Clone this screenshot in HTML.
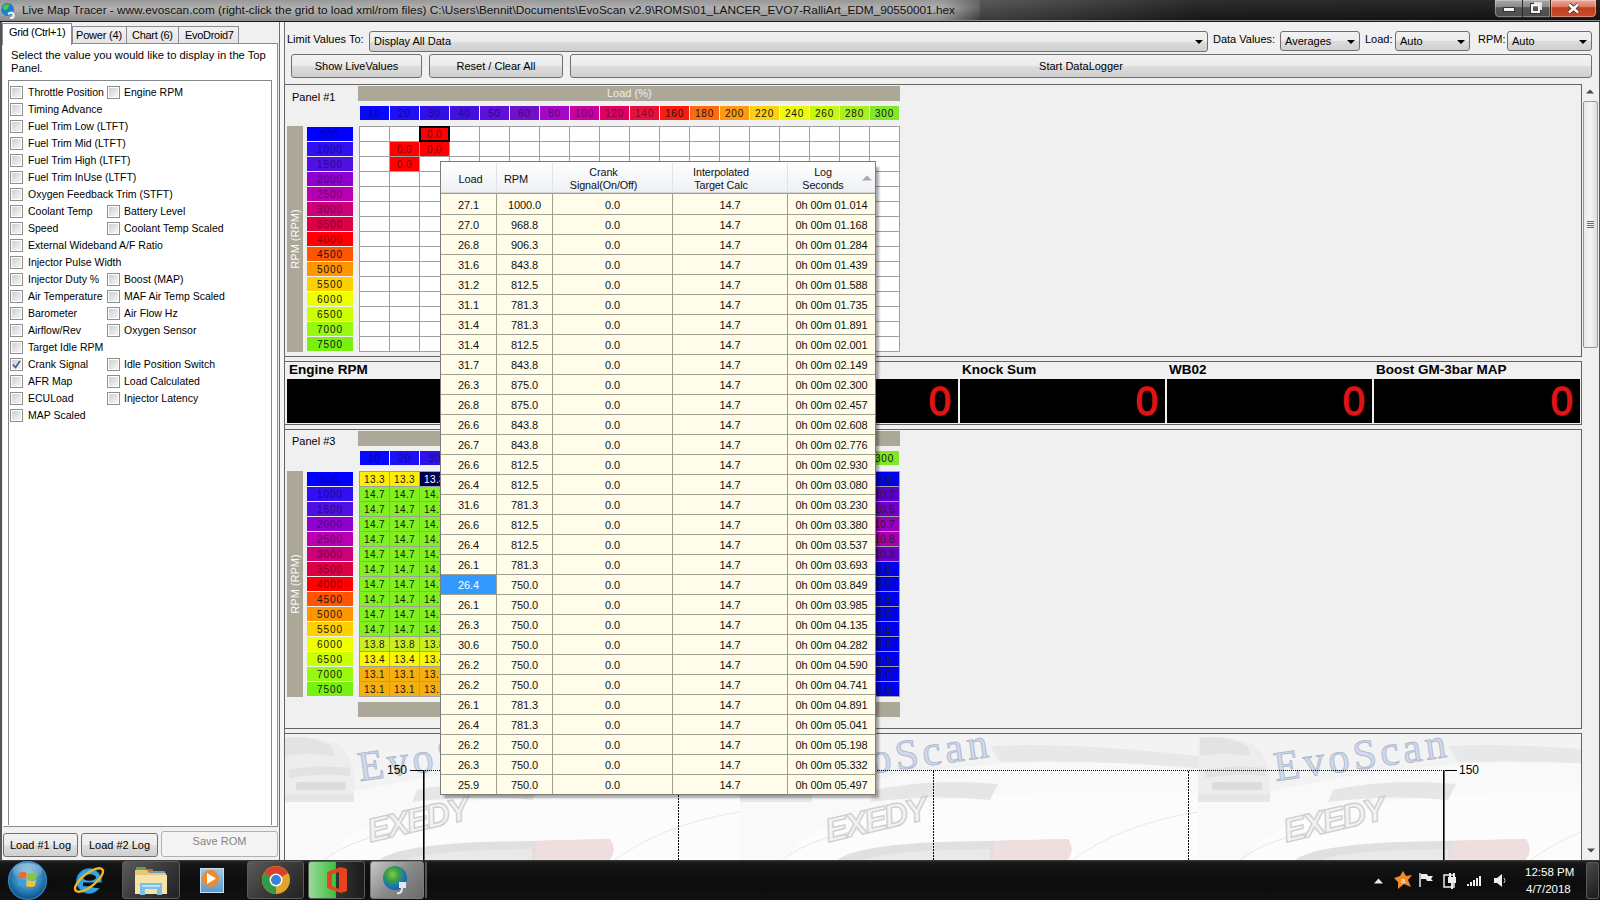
<!DOCTYPE html><html><head><meta charset="utf-8"><style>
html,body{margin:0;padding:0;width:1600px;height:900px;overflow:hidden;background:#f0f0f0;font-family:"Liberation Sans", sans-serif;font-size:11px;color:#000;}
div{box-sizing:border-box;}
.btn{position:absolute;border:1px solid #707070;border-radius:3px;background:linear-gradient(#f2f2f2 0%,#ebebeb 50%,#dddddd 51%,#cfcfcf 100%);text-align:center;line-height:23px;font-size:11px;color:#000;}
.cmb{position:absolute;border:1px solid #707070;border-radius:3px;background:linear-gradient(#f2f2f2 0%,#ebebeb 50%,#dddddd 51%,#cfcfcf 100%);font-size:11px;line-height:18px;padding-left:4px;}
.arr{position:absolute;width:0;height:0;border-left:4px solid transparent;border-right:4px solid transparent;border-top:4px solid #000;}
.cb{position:absolute;width:13px;height:13px;border:1px solid #8e8f8f;background:#fff;}
.cb::after{content:"";position:absolute;left:1px;top:1px;width:9px;height:9px;background:linear-gradient(135deg,#cfcfcf,#f6f6f6);}
.lbl{position:absolute;white-space:nowrap;font-size:10.5px;line-height:13px;}
.hc{position:absolute;top:0;height:14px;width:29px;text-align:center;font-size:10px;line-height:16px;color:#151515;letter-spacing:0.8px;overflow:hidden;}
.rc{position:absolute;left:0;width:46px;height:14px;text-align:center;font-size:10px;line-height:16px;color:#151515;letter-spacing:0.9px;overflow:hidden;}
.gc{position:absolute;width:29px;height:14px;text-align:center;font-size:10px;line-height:15px;color:#151515;letter-spacing:0.4px;}
.pr{position:absolute;left:0;width:435px;height:20px;}
.pc{position:absolute;top:0;height:20px;line-height:22px;text-align:center;font-size:11px;color:#111;letter-spacing:-0.1px;}

</style></head><body>
<div style="position:absolute;left:0px;top:0px;width:1600px;height:22px;background:linear-gradient(90deg,#5c5c5c 0%,#6a6a6a 30%,#4a4a4a 62%,#1c1c1c 75%,#141414 100%);"></div>
<div style="position:absolute;left:0px;top:0px;width:1600px;height:22px;background:linear-gradient(rgba(255,255,255,.08),rgba(0,0,0,.25));"></div>
<div style="position:absolute;left:0px;top:0px;width:980px;height:21px;background:linear-gradient(90deg,rgba(175,175,175,.9) 0%,rgba(175,175,175,.9) 96%,rgba(175,175,175,0) 100%);"></div>
<div style="position:absolute;left:0px;top:0px;width:980px;height:21px;background:linear-gradient(rgba(120,120,120,.35),rgba(255,255,255,.12) 40%,rgba(60,60,60,.25) 100%);"></div>
<div style="position:absolute;left:0px;top:20px;width:1600px;height:1px;background:#8a8a8a;"></div>
<div style="position:absolute;left:0px;top:21px;width:1600px;height:1px;background:#1a1a1a;"></div>
<div style="position:absolute;left:22px;top:4px;white-space:nowrap;line-height:13px;font-size:11.8px;color:#111;">Live Map Tracer - www.evoscan.com (right-click the grid to load xml/rom files) C:\Users\Bennit\Documents\EvoScan v2.9\ROMS\01_LANCER_EVO7-RalliArt_EDM_90550001.hex</div>
<svg style="position:absolute;left:0px;top:2px" width="18" height="18" viewBox="0 0 18 18"><circle cx="7.5" cy="7.5" r="6.5" fill="#1d7fc4"/><path d="M2.5 5 Q5 1.5 9.5 2.5 Q9 6 5.5 8.5 Q3 8 2.5 5Z" fill="#5cc24a"/><path d="M8 12 Q12 9 13.5 12.5 Q15 16 10 16" stroke="#e8f2ff" stroke-width="2.2" fill="none"/></svg>
<div style="position:absolute;left:1494px;top:-1px;width:57px;height:19px;border:1px solid #2a2a2a;border-radius:0 0 0 5px;background:linear-gradient(#a8a8a8,#8a8a8a 40%,#555 45%,#4d4d4d 100%);box-shadow:inset 0 0 0 1px rgba(255,255,255,.3);"></div>
<div style="position:absolute;left:1522px;top:0px;width:1px;height:17px;background:#2a2a2a;"></div>
<div style="position:absolute;left:1504px;top:8px;width:10px;height:3px;background:#f4f4f4;box-shadow:0 0 0 1px #333;"></div>
<div style="position:absolute;left:1531px;top:4px;width:9px;height:9px;border:2px solid #f4f4f4;box-shadow:0 0 0 1px #333;"></div>
<div style="position:absolute;left:1534px;top:2px;width:8px;height:8px;border-top:2px solid #e0e0e0;border-right:2px solid #e0e0e0;"></div>
<div style="position:absolute;left:1550px;top:-1px;width:47px;height:19px;border:1px solid #3a1a10;border-radius:0 0 5px 0;background:linear-gradient(#f0a898,#d87a66 40%,#c2401e 45%,#c84a30 100%);box-shadow:inset 0 0 0 1px rgba(255,255,255,.35);"></div>
<svg style="position:absolute;left:1567px;top:3px" width="13" height="11" viewBox="0 0 13 11"><path d="M2 1.5 L11 9.5 M11 1.5 L2 9.5" stroke="#4a2a20" stroke-width="4.2"/><path d="M2 1.5 L11 9.5 M11 1.5 L2 9.5" stroke="#fff" stroke-width="2.6"/></svg>
<div style="position:absolute;left:0px;top:22px;width:2px;height:838px;background:#555;"></div>
<div style="position:absolute;left:1599px;top:22px;width:1px;height:838px;background:#555;"></div>
<div style="position:absolute;left:72px;top:26px;width:55px;height:19px;border:1px solid #898c95;border-bottom:none;background:linear-gradient(#f2f2f2,#e3e3e3);"></div>
<div style="position:absolute;left:126px;top:26px;width:53px;height:19px;border:1px solid #898c95;border-bottom:none;background:linear-gradient(#f2f2f2,#e3e3e3);"></div>
<div style="position:absolute;left:178px;top:26px;width:61px;height:19px;border:1px solid #898c95;border-bottom:none;background:linear-gradient(#f2f2f2,#e3e3e3);"></div>
<div style="position:absolute;left:3px;top:43px;width:275px;height:784px;background:#fff;border:1px solid #898c95;border-left-color:#fff;"></div>
<div style="position:absolute;left:2px;top:23px;width:70px;height:22px;border:1px solid #898c95;border-bottom:none;background:#fff;"></div>
<div style="position:absolute;left:9px;top:26px;white-space:nowrap;line-height:13px;font-size:11px;letter-spacing:-0.35px;">Grid (Ctrl+1)</div>
<div style="position:absolute;left:76px;top:29px;white-space:nowrap;line-height:13px;font-size:11px;letter-spacing:-0.2px;">Power (4)</div>
<div style="position:absolute;left:132px;top:29px;white-space:nowrap;line-height:13px;font-size:11px;letter-spacing:-0.3px;">Chart (6)</div>
<div style="position:absolute;left:185px;top:29px;white-space:nowrap;line-height:13px;font-size:11px;letter-spacing:-0.3px;">EvoDroid7</div>
<div style="position:absolute;left:11px;top:49px;white-space:nowrap;line-height:13px;font-size:11.2px;line-height:13px;">Select the value you would like to display in the Top<br>Panel.</div>
<div style="position:absolute;left:8px;top:80px;width:264px;height:745px;background:#fff;border:1px solid #828790;border-bottom:none;"></div>
<div class="cb" style="left:10px;top:86px;"></div>
<div class="lbl" style="left:28px;top:86px;">Throttle Position</div>
<div class="cb" style="left:107px;top:86px;"></div>
<div class="lbl" style="left:124px;top:86px;">Engine RPM</div>
<div class="cb" style="left:10px;top:103px;"></div>
<div class="lbl" style="left:28px;top:103px;">Timing Advance</div>
<div class="cb" style="left:10px;top:120px;"></div>
<div class="lbl" style="left:28px;top:120px;">Fuel Trim Low (LTFT)</div>
<div class="cb" style="left:10px;top:137px;"></div>
<div class="lbl" style="left:28px;top:137px;">Fuel Trim Mid (LTFT)</div>
<div class="cb" style="left:10px;top:154px;"></div>
<div class="lbl" style="left:28px;top:154px;">Fuel Trim High (LTFT)</div>
<div class="cb" style="left:10px;top:171px;"></div>
<div class="lbl" style="left:28px;top:171px;">Fuel Trim InUse (LTFT)</div>
<div class="cb" style="left:10px;top:188px;"></div>
<div class="lbl" style="left:28px;top:188px;">Oxygen Feedback Trim (STFT)</div>
<div class="cb" style="left:10px;top:205px;"></div>
<div class="lbl" style="left:28px;top:205px;">Coolant Temp</div>
<div class="cb" style="left:107px;top:205px;"></div>
<div class="lbl" style="left:124px;top:205px;">Battery Level</div>
<div class="cb" style="left:10px;top:222px;"></div>
<div class="lbl" style="left:28px;top:222px;">Speed</div>
<div class="cb" style="left:107px;top:222px;"></div>
<div class="lbl" style="left:124px;top:222px;">Coolant Temp Scaled</div>
<div class="cb" style="left:10px;top:239px;"></div>
<div class="lbl" style="left:28px;top:239px;">External Wideband A/F Ratio</div>
<div class="cb" style="left:10px;top:256px;"></div>
<div class="lbl" style="left:28px;top:256px;">Injector Pulse Width</div>
<div class="cb" style="left:10px;top:273px;"></div>
<div class="lbl" style="left:28px;top:273px;">Injector Duty %</div>
<div class="cb" style="left:107px;top:273px;"></div>
<div class="lbl" style="left:124px;top:273px;">Boost (MAP)</div>
<div class="cb" style="left:10px;top:290px;"></div>
<div class="lbl" style="left:28px;top:290px;">Air Temperature</div>
<div class="cb" style="left:107px;top:290px;"></div>
<div class="lbl" style="left:124px;top:290px;">MAF Air Temp Scaled</div>
<div class="cb" style="left:10px;top:307px;"></div>
<div class="lbl" style="left:28px;top:307px;">Barometer</div>
<div class="cb" style="left:107px;top:307px;"></div>
<div class="lbl" style="left:124px;top:307px;">Air Flow Hz</div>
<div class="cb" style="left:10px;top:324px;"></div>
<div class="lbl" style="left:28px;top:324px;">Airflow/Rev</div>
<div class="cb" style="left:107px;top:324px;"></div>
<div class="lbl" style="left:124px;top:324px;">Oxygen Sensor</div>
<div class="cb" style="left:10px;top:341px;"></div>
<div class="lbl" style="left:28px;top:341px;">Target Idle RPM</div>
<div class="cb" style="left:10px;top:358px;"></div>
<div class="lbl" style="left:28px;top:358px;">Crank Signal</div>
<svg style="position:absolute;left:11px;top:359px" width="11" height="11" viewBox="0 0 11 11"><path d="M2 5.5 L4.5 8.5 L9 2" stroke="#3a5a9a" stroke-width="1.6" fill="none"/></svg>
<div class="cb" style="left:107px;top:358px;"></div>
<div class="lbl" style="left:124px;top:358px;">Idle Position Switch</div>
<div class="cb" style="left:10px;top:375px;"></div>
<div class="lbl" style="left:28px;top:375px;">AFR Map</div>
<div class="cb" style="left:107px;top:375px;"></div>
<div class="lbl" style="left:124px;top:375px;">Load Calculated</div>
<div class="cb" style="left:10px;top:392px;"></div>
<div class="lbl" style="left:28px;top:392px;">ECULoad</div>
<div class="cb" style="left:107px;top:392px;"></div>
<div class="lbl" style="left:124px;top:392px;">Injector Latency</div>
<div class="cb" style="left:10px;top:409px;"></div>
<div class="lbl" style="left:28px;top:409px;">MAP Scaled</div>
<div class="btn" style="left:3px;top:833px;width:75px;height:24px;">Load #1 Log</div>
<div class="btn" style="left:81px;top:833px;width:77px;height:24px;">Load #2 Log</div>
<div style="position:absolute;left:161px;top:831px;width:117px;height:26px;border:1px solid #adb2b5;border-radius:3px;background:#f4f4f4;color:#838383;text-align:center;line-height:19px;font-size:11px;">Save ROM</div>
<div style="position:absolute;left:279px;top:22px;width:1px;height:838px;background:#6d6d6d;"></div>
<div style="position:absolute;left:280px;top:22px;width:4px;height:838px;background:#f6f6f6;"></div>
<div style="position:absolute;left:284px;top:22px;width:1px;height:838px;background:#6d6d6d;"></div>
<div style="position:absolute;left:287px;top:33px;white-space:nowrap;line-height:13px;font-size:11px;">Limit Values To:</div>
<div class="cmb" style="left:369px;top:31px;width:839px;height:21px;">Display All Data</div>
<div class="arr" style="left:1195px;top:40px;"></div>
<div style="position:absolute;left:1213px;top:33px;white-space:nowrap;line-height:13px;font-size:11px;">Data Values:</div>
<div class="cmb" style="left:1280px;top:31px;width:80px;height:20px;">Averages</div>
<div class="arr" style="left:1347px;top:40px;"></div>
<div style="position:absolute;left:1365px;top:33px;white-space:nowrap;line-height:13px;font-size:11px;">Load:</div>
<div class="cmb" style="left:1395px;top:31px;width:75px;height:20px;">Auto</div>
<div class="arr" style="left:1457px;top:40px;"></div>
<div style="position:absolute;left:1478px;top:33px;white-space:nowrap;line-height:13px;font-size:11px;">RPM:</div>
<div class="cmb" style="left:1507px;top:31px;width:85px;height:20px;">Auto</div>
<div class="arr" style="left:1579px;top:40px;"></div>
<div class="btn" style="left:291px;top:54px;width:131px;height:24px;">Show LiveValues</div>
<div class="btn" style="left:429px;top:54px;width:134px;height:24px;">Reset / Clear All</div>
<div class="btn" style="left:570px;top:54px;width:1022px;height:24px;">Start DataLogger</div>
<div style="position:absolute;left:1582px;top:84px;width:16px;height:776px;background:#f0f0f0;"></div>
<svg style="position:absolute;left:1586px;top:89px" width="8" height="5"><path d="M0 4.5 L4 0.5 L8 4.5Z" fill="#4a4a4a"/></svg>
<svg style="position:absolute;left:1587px;top:848px" width="8" height="5"><path d="M0 0.5 L4 4.5 L8 0.5Z" fill="#4a4a4a"/></svg>
<div style="position:absolute;left:1583px;top:101px;width:15px;height:247px;border:1px solid #979797;border-radius:2px;background:linear-gradient(90deg,#e8e8e8,#f4f4f4 50%,#dcdcdc);"></div>
<div style="position:absolute;left:1587px;top:221px;width:7px;height:1px;background:#6a6a6a;"></div>
<div style="position:absolute;left:1587px;top:223px;width:7px;height:1px;background:#6a6a6a;"></div>
<div style="position:absolute;left:1587px;top:225px;width:7px;height:1px;background:#6a6a6a;"></div>
<div style="position:absolute;left:1587px;top:227px;width:7px;height:1px;background:#6a6a6a;"></div>
<div style="position:absolute;left:284px;top:84px;width:1298px;height:273px;border:1px solid #646464;background:#f0f0f0;"></div>
<div style="position:absolute;left:292px;top:91px;white-space:nowrap;line-height:13px;font-size:11px;">Panel #1</div>
<div style="position:absolute;left:358px;top:86px;width:542px;height:15px;background:#aca899;"></div>
<div style="position:absolute;left:607px;top:86px;white-space:nowrap;line-height:13px;font-size:11px;color:#ededed;line-height:15px;">Load (%)</div>
<div class="hc" style="left:360px;top:106px;background:#0808ff;color:rgba(0,0,30,.5);">10</div>
<div class="hc" style="left:390px;top:106px;background:#1e10f5;color:rgba(0,0,30,.5);">20</div>
<div class="hc" style="left:420px;top:106px;background:#3010e8;color:rgba(0,0,30,.5);">30</div>
<div class="hc" style="left:450px;top:106px;background:#4210e0;color:rgba(0,0,30,.5);">40</div>
<div class="hc" style="left:480px;top:106px;background:#5c10d8;color:rgba(0,0,30,.5);">50</div>
<div class="hc" style="left:510px;top:106px;background:#7010c8;color:rgba(0,0,30,.5);">60</div>
<div class="hc" style="left:540px;top:106px;background:#a408c4;color:rgba(0,0,30,.5);">80</div>
<div class="hc" style="left:570px;top:106px;background:#c800a0;color:rgba(0,0,30,.5);">100</div>
<div class="hc" style="left:600px;top:106px;background:#e00060;color:rgba(0,0,30,.5);">120</div>
<div class="hc" style="left:630px;top:106px;background:#e8103a;color:rgba(0,0,30,.5);">140</div>
<div class="hc" style="left:660px;top:106px;background:#ff1a10;color:#151515;">160</div>
<div class="hc" style="left:690px;top:106px;background:#ff6a10;color:#151515;">180</div>
<div class="hc" style="left:720px;top:106px;background:#ff9a10;color:#151515;">200</div>
<div class="hc" style="left:750px;top:106px;background:#ffd010;color:#151515;">220</div>
<div class="hc" style="left:780px;top:106px;background:#eef810;color:#151515;">240</div>
<div class="hc" style="left:810px;top:106px;background:#c8f810;color:#151515;">260</div>
<div class="hc" style="left:840px;top:106px;background:#a8f020;color:#151515;">280</div>
<div class="hc" style="left:870px;top:106px;background:#80e828;color:#151515;">300</div>
<div style="position:absolute;left:287px;top:126px;width:16px;height:226px;background:#aca899;"></div>
<div style="position:absolute;left:237px;top:231px;width:116px;height:16px;transform:rotate(-90deg);text-align:center;color:#fafafa;font-size:11px;line-height:16px;">RPM (RPM)</div>
<div class="rc" style="left:307px;top:127px;background:#0000ff;color:rgba(0,0,30,.5);">500</div>
<div class="rc" style="left:307px;top:142px;background:#3010f0;color:rgba(0,0,30,.5);">1000</div>
<div class="rc" style="left:307px;top:157px;background:#5010e0;color:rgba(0,0,30,.5);">1500</div>
<div class="rc" style="left:307px;top:172px;background:#9000d0;color:rgba(0,0,30,.5);">2000</div>
<div class="rc" style="left:307px;top:187px;background:#b800b0;color:rgba(0,0,30,.5);">2500</div>
<div class="rc" style="left:307px;top:202px;background:#cc0077;color:rgba(0,0,30,.5);">3000</div>
<div class="rc" style="left:307px;top:217px;background:#dd0044;color:rgba(0,0,30,.5);">3500</div>
<div class="rc" style="left:307px;top:232px;background:#ff0000;color:rgba(0,0,30,.5);">4000</div>
<div class="rc" style="left:307px;top:247px;background:#ff5500;color:#151515;">4500</div>
<div class="rc" style="left:307px;top:262px;background:#ff9500;color:#151515;">5000</div>
<div class="rc" style="left:307px;top:277px;background:#ffd000;color:#151515;">5500</div>
<div class="rc" style="left:307px;top:292px;background:#eeff00;color:#151515;">6000</div>
<div class="rc" style="left:307px;top:307px;background:#ccff00;color:#151515;">6500</div>
<div class="rc" style="left:307px;top:322px;background:#99f810;color:#151515;">7000</div>
<div class="rc" style="left:307px;top:337px;background:#78f010;color:#151515;">7500</div>
<div style="position:absolute;left:359px;top:126px;width:541px;height:226px;background:#fff;"></div>
<div class="gc" style="left:390px;top:142px;background:#ff0000;color:rgba(0,0,0,.55);">0.0</div>
<div class="gc" style="left:420px;top:142px;background:#ff0000;color:rgba(0,0,0,.55);">0.0</div>
<div class="gc" style="left:390px;top:157px;background:#ff0000;color:rgba(0,0,0,.55);">0.0</div>
<div style="position:absolute;left:359px;top:126px;width:1px;height:226px;background:#a0a0a0;"></div>
<div style="position:absolute;left:389px;top:126px;width:1px;height:226px;background:#a0a0a0;"></div>
<div style="position:absolute;left:419px;top:126px;width:1px;height:226px;background:#a0a0a0;"></div>
<div style="position:absolute;left:449px;top:126px;width:1px;height:226px;background:#a0a0a0;"></div>
<div style="position:absolute;left:479px;top:126px;width:1px;height:226px;background:#a0a0a0;"></div>
<div style="position:absolute;left:509px;top:126px;width:1px;height:226px;background:#a0a0a0;"></div>
<div style="position:absolute;left:539px;top:126px;width:1px;height:226px;background:#a0a0a0;"></div>
<div style="position:absolute;left:569px;top:126px;width:1px;height:226px;background:#a0a0a0;"></div>
<div style="position:absolute;left:599px;top:126px;width:1px;height:226px;background:#a0a0a0;"></div>
<div style="position:absolute;left:629px;top:126px;width:1px;height:226px;background:#a0a0a0;"></div>
<div style="position:absolute;left:659px;top:126px;width:1px;height:226px;background:#a0a0a0;"></div>
<div style="position:absolute;left:689px;top:126px;width:1px;height:226px;background:#a0a0a0;"></div>
<div style="position:absolute;left:719px;top:126px;width:1px;height:226px;background:#a0a0a0;"></div>
<div style="position:absolute;left:749px;top:126px;width:1px;height:226px;background:#a0a0a0;"></div>
<div style="position:absolute;left:779px;top:126px;width:1px;height:226px;background:#a0a0a0;"></div>
<div style="position:absolute;left:809px;top:126px;width:1px;height:226px;background:#a0a0a0;"></div>
<div style="position:absolute;left:839px;top:126px;width:1px;height:226px;background:#a0a0a0;"></div>
<div style="position:absolute;left:869px;top:126px;width:1px;height:226px;background:#a0a0a0;"></div>
<div style="position:absolute;left:899px;top:126px;width:1px;height:226px;background:#a0a0a0;"></div>
<div style="position:absolute;left:359px;top:126px;width:541px;height:1px;background:#a0a0a0;"></div>
<div style="position:absolute;left:359px;top:141px;width:541px;height:1px;background:#a0a0a0;"></div>
<div style="position:absolute;left:359px;top:156px;width:541px;height:1px;background:#a0a0a0;"></div>
<div style="position:absolute;left:359px;top:171px;width:541px;height:1px;background:#a0a0a0;"></div>
<div style="position:absolute;left:359px;top:186px;width:541px;height:1px;background:#a0a0a0;"></div>
<div style="position:absolute;left:359px;top:201px;width:541px;height:1px;background:#a0a0a0;"></div>
<div style="position:absolute;left:359px;top:216px;width:541px;height:1px;background:#a0a0a0;"></div>
<div style="position:absolute;left:359px;top:231px;width:541px;height:1px;background:#a0a0a0;"></div>
<div style="position:absolute;left:359px;top:246px;width:541px;height:1px;background:#a0a0a0;"></div>
<div style="position:absolute;left:359px;top:261px;width:541px;height:1px;background:#a0a0a0;"></div>
<div style="position:absolute;left:359px;top:276px;width:541px;height:1px;background:#a0a0a0;"></div>
<div style="position:absolute;left:359px;top:291px;width:541px;height:1px;background:#a0a0a0;"></div>
<div style="position:absolute;left:359px;top:306px;width:541px;height:1px;background:#a0a0a0;"></div>
<div style="position:absolute;left:359px;top:321px;width:541px;height:1px;background:#a0a0a0;"></div>
<div style="position:absolute;left:359px;top:336px;width:541px;height:1px;background:#a0a0a0;"></div>
<div style="position:absolute;left:359px;top:351px;width:541px;height:1px;background:#a0a0a0;"></div>
<div style="position:absolute;left:419px;top:126px;width:31px;height:16px;border:2px solid #000;background:#ff0000;text-align:center;font-size:10px;line-height:13px;color:rgba(0,0,0,.6);letter-spacing:0.4px;">0.0</div>
<div style="position:absolute;left:284px;top:429px;width:1298px;height:300px;border:1px solid #646464;background:#f0f0f0;"></div>
<div style="position:absolute;left:292px;top:435px;white-space:nowrap;line-height:13px;font-size:11px;">Panel #3</div>
<div style="position:absolute;left:358px;top:431px;width:542px;height:15px;background:#aca899;"></div>
<div style="position:absolute;left:607px;top:431px;white-space:nowrap;line-height:13px;font-size:11px;color:#ededed;line-height:15px;">Load (%)</div>
<div class="hc" style="left:360px;top:451px;background:#0808ff;color:rgba(0,0,30,.5);">10</div>
<div class="hc" style="left:390px;top:451px;background:#1e10f5;color:rgba(0,0,30,.5);">20</div>
<div class="hc" style="left:420px;top:451px;background:#3010e8;color:rgba(0,0,30,.5);">30</div>
<div class="hc" style="left:450px;top:451px;background:#4210e0;color:rgba(0,0,30,.5);">40</div>
<div class="hc" style="left:480px;top:451px;background:#5c10d8;color:rgba(0,0,30,.5);">50</div>
<div class="hc" style="left:510px;top:451px;background:#7010c8;color:rgba(0,0,30,.5);">60</div>
<div class="hc" style="left:540px;top:451px;background:#a408c4;color:rgba(0,0,30,.5);">80</div>
<div class="hc" style="left:570px;top:451px;background:#c800a0;color:rgba(0,0,30,.5);">100</div>
<div class="hc" style="left:600px;top:451px;background:#e00060;color:rgba(0,0,30,.5);">120</div>
<div class="hc" style="left:630px;top:451px;background:#e8103a;color:rgba(0,0,30,.5);">140</div>
<div class="hc" style="left:660px;top:451px;background:#ff1a10;color:#151515;">160</div>
<div class="hc" style="left:690px;top:451px;background:#ff6a10;color:#151515;">180</div>
<div class="hc" style="left:720px;top:451px;background:#ff9a10;color:#151515;">200</div>
<div class="hc" style="left:750px;top:451px;background:#ffd010;color:#151515;">220</div>
<div class="hc" style="left:780px;top:451px;background:#eef810;color:#151515;">240</div>
<div class="hc" style="left:810px;top:451px;background:#c8f810;color:#151515;">260</div>
<div class="hc" style="left:840px;top:451px;background:#a8f020;color:#151515;">280</div>
<div class="hc" style="left:870px;top:451px;background:#80e828;color:#151515;">300</div>
<div style="position:absolute;left:287px;top:471px;width:16px;height:226px;background:#aca899;"></div>
<div style="position:absolute;left:237px;top:576px;width:116px;height:16px;transform:rotate(-90deg);text-align:center;color:#fafafa;font-size:11px;line-height:16px;">RPM (RPM)</div>
<div class="rc" style="left:307px;top:472px;background:#0000ff;color:rgba(0,0,30,.5);">500</div>
<div class="rc" style="left:307px;top:487px;background:#3010f0;color:rgba(0,0,30,.5);">1000</div>
<div class="rc" style="left:307px;top:502px;background:#5010e0;color:rgba(0,0,30,.5);">1500</div>
<div class="rc" style="left:307px;top:517px;background:#9000d0;color:rgba(0,0,30,.5);">2000</div>
<div class="rc" style="left:307px;top:532px;background:#b800b0;color:rgba(0,0,30,.5);">2500</div>
<div class="rc" style="left:307px;top:547px;background:#cc0077;color:rgba(0,0,30,.5);">3000</div>
<div class="rc" style="left:307px;top:562px;background:#dd0044;color:rgba(0,0,30,.5);">3500</div>
<div class="rc" style="left:307px;top:577px;background:#ff0000;color:rgba(0,0,30,.5);">4000</div>
<div class="rc" style="left:307px;top:592px;background:#ff5500;color:#151515;">4500</div>
<div class="rc" style="left:307px;top:607px;background:#ff9500;color:#151515;">5000</div>
<div class="rc" style="left:307px;top:622px;background:#ffd000;color:#151515;">5500</div>
<div class="rc" style="left:307px;top:637px;background:#eeff00;color:#151515;">6000</div>
<div class="rc" style="left:307px;top:652px;background:#ccff00;color:#151515;">6500</div>
<div class="rc" style="left:307px;top:667px;background:#99f810;color:#151515;">7000</div>
<div class="rc" style="left:307px;top:682px;background:#78f010;color:#151515;">7500</div>
<div style="position:absolute;left:359px;top:471px;width:541px;height:226px;background:#fff;"></div>
<div class="gc" style="left:360px;top:472px;background:#ffee00;color:#151515;">13.3</div>
<div class="gc" style="left:360px;top:487px;background:#80f020;color:#151515;">14.7</div>
<div class="gc" style="left:360px;top:502px;background:#80f020;color:#151515;">14.7</div>
<div class="gc" style="left:360px;top:517px;background:#80f020;color:#151515;">14.7</div>
<div class="gc" style="left:360px;top:532px;background:#80f020;color:#151515;">14.7</div>
<div class="gc" style="left:360px;top:547px;background:#80f020;color:#151515;">14.7</div>
<div class="gc" style="left:360px;top:562px;background:#80f020;color:#151515;">14.7</div>
<div class="gc" style="left:360px;top:577px;background:#80f020;color:#151515;">14.7</div>
<div class="gc" style="left:360px;top:592px;background:#80f020;color:#151515;">14.7</div>
<div class="gc" style="left:360px;top:607px;background:#80f020;color:#151515;">14.7</div>
<div class="gc" style="left:360px;top:622px;background:#80f020;color:#151515;">14.7</div>
<div class="gc" style="left:360px;top:637px;background:#c8f020;color:#151515;">13.8</div>
<div class="gc" style="left:360px;top:652px;background:#f8f800;color:#151515;">13.4</div>
<div class="gc" style="left:360px;top:667px;background:#f5b010;color:#151515;">13.1</div>
<div class="gc" style="left:360px;top:682px;background:#f5b010;color:#151515;">13.1</div>
<div class="gc" style="left:390px;top:472px;background:#ffee00;color:#151515;">13.3</div>
<div class="gc" style="left:390px;top:487px;background:#80f020;color:#151515;">14.7</div>
<div class="gc" style="left:390px;top:502px;background:#80f020;color:#151515;">14.7</div>
<div class="gc" style="left:390px;top:517px;background:#80f020;color:#151515;">14.7</div>
<div class="gc" style="left:390px;top:532px;background:#80f020;color:#151515;">14.7</div>
<div class="gc" style="left:390px;top:547px;background:#80f020;color:#151515;">14.7</div>
<div class="gc" style="left:390px;top:562px;background:#80f020;color:#151515;">14.7</div>
<div class="gc" style="left:390px;top:577px;background:#80f020;color:#151515;">14.7</div>
<div class="gc" style="left:390px;top:592px;background:#80f020;color:#151515;">14.7</div>
<div class="gc" style="left:390px;top:607px;background:#80f020;color:#151515;">14.7</div>
<div class="gc" style="left:390px;top:622px;background:#80f020;color:#151515;">14.7</div>
<div class="gc" style="left:390px;top:637px;background:#c8f020;color:#151515;">13.8</div>
<div class="gc" style="left:390px;top:652px;background:#f8f800;color:#151515;">13.4</div>
<div class="gc" style="left:390px;top:667px;background:#f5b010;color:#151515;">13.1</div>
<div class="gc" style="left:390px;top:682px;background:#f5b010;color:#151515;">13.1</div>
<div class="gc" style="left:420px;top:472px;background:#000050;color:#ffffff;">13.3</div>
<div class="gc" style="left:420px;top:487px;background:#80f020;color:#151515;">14.7</div>
<div class="gc" style="left:420px;top:502px;background:#80f020;color:#151515;">14.7</div>
<div class="gc" style="left:420px;top:517px;background:#80f020;color:#151515;">14.7</div>
<div class="gc" style="left:420px;top:532px;background:#80f020;color:#151515;">14.7</div>
<div class="gc" style="left:420px;top:547px;background:#80f020;color:#151515;">14.7</div>
<div class="gc" style="left:420px;top:562px;background:#80f020;color:#151515;">14.7</div>
<div class="gc" style="left:420px;top:577px;background:#80f020;color:#151515;">14.7</div>
<div class="gc" style="left:420px;top:592px;background:#80f020;color:#151515;">14.7</div>
<div class="gc" style="left:420px;top:607px;background:#80f020;color:#151515;">14.7</div>
<div class="gc" style="left:420px;top:622px;background:#80f020;color:#151515;">14.7</div>
<div class="gc" style="left:420px;top:637px;background:#c8f020;color:#151515;">13.8</div>
<div class="gc" style="left:420px;top:652px;background:#f8f800;color:#151515;">13.4</div>
<div class="gc" style="left:420px;top:667px;background:#f5b010;color:#151515;">13.1</div>
<div class="gc" style="left:420px;top:682px;background:#f5b010;color:#151515;">13.1</div>
<div class="gc" style="left:870px;top:472px;background:#0000f0;color:#202020;">9.6</div>
<div class="gc" style="left:870px;top:487px;background:#5a00cc;color:#202020;">10.2</div>
<div class="gc" style="left:870px;top:502px;background:#7000c8;color:#202020;">10.5</div>
<div class="gc" style="left:870px;top:517px;background:#9800c0;color:#202020;">10.7</div>
<div class="gc" style="left:870px;top:532px;background:#a800b0;color:#202020;">10.8</div>
<div class="gc" style="left:870px;top:547px;background:#6800c8;color:#202020;">10.3</div>
<div class="gc" style="left:870px;top:562px;background:#0000f0;color:#202020;">9.5</div>
<div class="gc" style="left:870px;top:577px;background:#0000f0;color:#202020;">9.5</div>
<div class="gc" style="left:870px;top:592px;background:#0000f0;color:#202020;">9.5</div>
<div class="gc" style="left:870px;top:607px;background:#0000f0;color:#202020;">9.5</div>
<div class="gc" style="left:870px;top:622px;background:#0000f0;color:#202020;">9.5</div>
<div class="gc" style="left:870px;top:637px;background:#0000f0;color:#202020;">9.5</div>
<div class="gc" style="left:870px;top:652px;background:#0000f0;color:#202020;">9.5</div>
<div class="gc" style="left:870px;top:667px;background:#0000f0;color:#202020;">9.5</div>
<div class="gc" style="left:870px;top:682px;background:#0000f0;color:#202020;">9.5</div>
<div style="position:absolute;left:359px;top:471px;width:1px;height:226px;background:#a0a0a0;"></div>
<div style="position:absolute;left:389px;top:471px;width:1px;height:226px;background:#a0a0a0;"></div>
<div style="position:absolute;left:419px;top:471px;width:1px;height:226px;background:#a0a0a0;"></div>
<div style="position:absolute;left:449px;top:471px;width:1px;height:226px;background:#a0a0a0;"></div>
<div style="position:absolute;left:479px;top:471px;width:1px;height:226px;background:#a0a0a0;"></div>
<div style="position:absolute;left:509px;top:471px;width:1px;height:226px;background:#a0a0a0;"></div>
<div style="position:absolute;left:539px;top:471px;width:1px;height:226px;background:#a0a0a0;"></div>
<div style="position:absolute;left:569px;top:471px;width:1px;height:226px;background:#a0a0a0;"></div>
<div style="position:absolute;left:599px;top:471px;width:1px;height:226px;background:#a0a0a0;"></div>
<div style="position:absolute;left:629px;top:471px;width:1px;height:226px;background:#a0a0a0;"></div>
<div style="position:absolute;left:659px;top:471px;width:1px;height:226px;background:#a0a0a0;"></div>
<div style="position:absolute;left:689px;top:471px;width:1px;height:226px;background:#a0a0a0;"></div>
<div style="position:absolute;left:719px;top:471px;width:1px;height:226px;background:#a0a0a0;"></div>
<div style="position:absolute;left:749px;top:471px;width:1px;height:226px;background:#a0a0a0;"></div>
<div style="position:absolute;left:779px;top:471px;width:1px;height:226px;background:#a0a0a0;"></div>
<div style="position:absolute;left:809px;top:471px;width:1px;height:226px;background:#a0a0a0;"></div>
<div style="position:absolute;left:839px;top:471px;width:1px;height:226px;background:#a0a0a0;"></div>
<div style="position:absolute;left:869px;top:471px;width:1px;height:226px;background:#a0a0a0;"></div>
<div style="position:absolute;left:899px;top:471px;width:1px;height:226px;background:#a0a0a0;"></div>
<div style="position:absolute;left:359px;top:471px;width:541px;height:1px;background:#a0a0a0;"></div>
<div style="position:absolute;left:359px;top:486px;width:541px;height:1px;background:#a0a0a0;"></div>
<div style="position:absolute;left:359px;top:501px;width:541px;height:1px;background:#a0a0a0;"></div>
<div style="position:absolute;left:359px;top:516px;width:541px;height:1px;background:#a0a0a0;"></div>
<div style="position:absolute;left:359px;top:531px;width:541px;height:1px;background:#a0a0a0;"></div>
<div style="position:absolute;left:359px;top:546px;width:541px;height:1px;background:#a0a0a0;"></div>
<div style="position:absolute;left:359px;top:561px;width:541px;height:1px;background:#a0a0a0;"></div>
<div style="position:absolute;left:359px;top:576px;width:541px;height:1px;background:#a0a0a0;"></div>
<div style="position:absolute;left:359px;top:591px;width:541px;height:1px;background:#a0a0a0;"></div>
<div style="position:absolute;left:359px;top:606px;width:541px;height:1px;background:#a0a0a0;"></div>
<div style="position:absolute;left:359px;top:621px;width:541px;height:1px;background:#a0a0a0;"></div>
<div style="position:absolute;left:359px;top:636px;width:541px;height:1px;background:#a0a0a0;"></div>
<div style="position:absolute;left:359px;top:651px;width:541px;height:1px;background:#a0a0a0;"></div>
<div style="position:absolute;left:359px;top:666px;width:541px;height:1px;background:#a0a0a0;"></div>
<div style="position:absolute;left:359px;top:681px;width:541px;height:1px;background:#a0a0a0;"></div>
<div style="position:absolute;left:359px;top:696px;width:541px;height:1px;background:#a0a0a0;"></div>
<div style="position:absolute;left:358px;top:702px;width:542px;height:15px;background:#aca899;"></div>
<div style="position:absolute;left:284px;top:361px;width:1298px;height:64px;border:1px solid #646464;background:#f0f0f0;"></div>
<div style="position:absolute;left:287px;top:379px;width:1293px;height:44px;background:#000;"></div>
<div style="position:absolute;left:958px;top:379px;width:2px;height:44px;background:#f0f0f0;"></div>
<div style="position:absolute;left:1165px;top:379px;width:2px;height:44px;background:#f0f0f0;"></div>
<div style="position:absolute;left:1372px;top:379px;width:2px;height:44px;background:#f0f0f0;"></div>
<div style="position:absolute;left:289px;top:362px;white-space:nowrap;line-height:13px;font-size:13.5px;font-weight:bold;line-height:16px;">Engine RPM</div>
<div style="position:absolute;left:962px;top:362px;white-space:nowrap;line-height:13px;font-size:13.5px;font-weight:bold;line-height:16px;">Knock Sum</div>
<div style="position:absolute;left:1169px;top:362px;white-space:nowrap;line-height:13px;font-size:13.5px;font-weight:bold;line-height:16px;">WB02</div>
<div style="position:absolute;left:1376px;top:362px;white-space:nowrap;line-height:13px;font-size:13.5px;font-weight:bold;line-height:16px;">Boost GM-3bar MAP</div>
<div style="position:absolute;left:891px;top:378px;width:60px;height:44px;text-align:right;color:#e01414;font-size:40px;line-height:47px;-webkit-text-stroke:1.3px #e01414;">0</div>
<div style="position:absolute;left:1098px;top:378px;width:60px;height:44px;text-align:right;color:#e01414;font-size:40px;line-height:47px;-webkit-text-stroke:1.3px #e01414;">0</div>
<div style="position:absolute;left:1305px;top:378px;width:60px;height:44px;text-align:right;color:#e01414;font-size:40px;line-height:47px;-webkit-text-stroke:1.3px #e01414;">0</div>
<div style="position:absolute;left:1513px;top:378px;width:60px;height:44px;text-align:right;color:#e01414;font-size:40px;line-height:47px;-webkit-text-stroke:1.3px #e01414;">0</div>
<div style="position:absolute;left:284px;top:733px;width:1298px;height:130px;border:1px solid #646464;background:#f4f4f4;overflow:hidden;"></div>
<div style="position:absolute;left:285px;top:734px;width:1296px;height:126px;overflow:hidden;">
<div style="position:absolute;left:-3px;top:0;width:458px;height:128px;"><svg width="458" height="128" viewBox="0 0 458 128">
<rect width="458" height="128" fill="#f9f9f9"/>
<path d="M0 0 H458 V36 Q380 26 300 28 Q200 32 120 48 Q60 60 0 68Z" fill="#f3f3f3"/>
<path d="M250 12 Q330 8 458 22 V34 Q360 26 260 28Z" fill="#e8e8e8"/>
<path d="M0 4 Q25 0 55 10 Q68 20 72 40 L72 66 Q40 70 0 66Z" fill="#ededed"/>
<path d="M2 4 Q25 0 50 12 L52 22 Q25 18 2 22Z" fill="#e3e3e3"/>
<path d="M6 36 Q35 30 68 34 L68 42 Q38 38 8 44Z" fill="#e2e2e2"/>
<rect x="14" y="48" width="50" height="8" rx="2" fill="#dcdcdc"/>
<path d="M0 60 H72 V68 H0Z" fill="#e6e6e6"/>
<path d="M45 128 Q60 95 130 78 Q260 52 458 58 V128Z" fill="#fcfcfc"/>
<path d="M135 56 Q190 44 258 50 L250 66 Q195 60 130 68Z" fill="#e6e6e6"/>
<path d="M40 128 Q70 100 160 90" stroke="#e6e6e6" stroke-width="1" fill="none"/>
<path d="M330 128 Q380 90 458 78" stroke="#e8e8e8" stroke-width="1" fill="none"/>
<g transform="rotate(-13 135 84)"><text x="135" y="97" text-anchor="middle" font-family="Liberation Sans" font-weight="bold" font-style="italic" font-size="33" letter-spacing="-2" fill="#f3f3f3" stroke="#d0d0d0" stroke-width="1.4">EXEDY</text></g>
<path d="M95 128 Q110 112 200 108 L328 105 Q336 116 326 128Z" fill="#e0e0e0"/>
<path d="M120 128 Q135 118 210 116 L250 115 L250 128Z" fill="#e9e9e9"/>
<path d="M255 107 L328 105 Q336 116 326 128 L252 128Z" fill="#efdede"/>
<g transform="rotate(-8 78 47)"><text x="78" y="47" font-family="Liberation Serif" font-size="42" letter-spacing="4" fill="#d2daea" stroke="#b0bcd2" stroke-width="1">EvoScan</text></g>
</svg></div>
<div style="position:absolute;left:455px;top:0;width:458px;height:128px;"><svg width="458" height="128" viewBox="0 0 458 128">
<rect width="458" height="128" fill="#f9f9f9"/>
<path d="M0 0 H458 V36 Q380 26 300 28 Q200 32 120 48 Q60 60 0 68Z" fill="#f3f3f3"/>
<path d="M250 12 Q330 8 458 22 V34 Q360 26 260 28Z" fill="#e8e8e8"/>
<path d="M0 4 Q25 0 55 10 Q68 20 72 40 L72 66 Q40 70 0 66Z" fill="#ededed"/>
<path d="M2 4 Q25 0 50 12 L52 22 Q25 18 2 22Z" fill="#e3e3e3"/>
<path d="M6 36 Q35 30 68 34 L68 42 Q38 38 8 44Z" fill="#e2e2e2"/>
<rect x="14" y="48" width="50" height="8" rx="2" fill="#dcdcdc"/>
<path d="M0 60 H72 V68 H0Z" fill="#e6e6e6"/>
<path d="M45 128 Q60 95 130 78 Q260 52 458 58 V128Z" fill="#fcfcfc"/>
<path d="M135 56 Q190 44 258 50 L250 66 Q195 60 130 68Z" fill="#e6e6e6"/>
<path d="M40 128 Q70 100 160 90" stroke="#e6e6e6" stroke-width="1" fill="none"/>
<path d="M330 128 Q380 90 458 78" stroke="#e8e8e8" stroke-width="1" fill="none"/>
<g transform="rotate(-13 135 84)"><text x="135" y="97" text-anchor="middle" font-family="Liberation Sans" font-weight="bold" font-style="italic" font-size="33" letter-spacing="-2" fill="#f3f3f3" stroke="#d0d0d0" stroke-width="1.4">EXEDY</text></g>
<path d="M95 128 Q110 112 200 108 L328 105 Q336 116 326 128Z" fill="#e0e0e0"/>
<path d="M120 128 Q135 118 210 116 L250 115 L250 128Z" fill="#e9e9e9"/>
<path d="M255 107 L328 105 Q336 116 326 128 L252 128Z" fill="#efdede"/>
<g transform="rotate(-8 78 47)"><text x="78" y="47" font-family="Liberation Serif" font-size="42" letter-spacing="4" fill="#d2daea" stroke="#b0bcd2" stroke-width="1">EvoScan</text></g>
</svg></div>
<div style="position:absolute;left:913px;top:0;width:458px;height:128px;"><svg width="458" height="128" viewBox="0 0 458 128">
<rect width="458" height="128" fill="#f9f9f9"/>
<path d="M0 0 H458 V36 Q380 26 300 28 Q200 32 120 48 Q60 60 0 68Z" fill="#f3f3f3"/>
<path d="M250 12 Q330 8 458 22 V34 Q360 26 260 28Z" fill="#e8e8e8"/>
<path d="M0 4 Q25 0 55 10 Q68 20 72 40 L72 66 Q40 70 0 66Z" fill="#ededed"/>
<path d="M2 4 Q25 0 50 12 L52 22 Q25 18 2 22Z" fill="#e3e3e3"/>
<path d="M6 36 Q35 30 68 34 L68 42 Q38 38 8 44Z" fill="#e2e2e2"/>
<rect x="14" y="48" width="50" height="8" rx="2" fill="#dcdcdc"/>
<path d="M0 60 H72 V68 H0Z" fill="#e6e6e6"/>
<path d="M45 128 Q60 95 130 78 Q260 52 458 58 V128Z" fill="#fcfcfc"/>
<path d="M135 56 Q190 44 258 50 L250 66 Q195 60 130 68Z" fill="#e6e6e6"/>
<path d="M40 128 Q70 100 160 90" stroke="#e6e6e6" stroke-width="1" fill="none"/>
<path d="M330 128 Q380 90 458 78" stroke="#e8e8e8" stroke-width="1" fill="none"/>
<g transform="rotate(-13 135 84)"><text x="135" y="97" text-anchor="middle" font-family="Liberation Sans" font-weight="bold" font-style="italic" font-size="33" letter-spacing="-2" fill="#f3f3f3" stroke="#d0d0d0" stroke-width="1.4">EXEDY</text></g>
<path d="M95 128 Q110 112 200 108 L328 105 Q336 116 326 128Z" fill="#e0e0e0"/>
<path d="M120 128 Q135 118 210 116 L250 115 L250 128Z" fill="#e9e9e9"/>
<path d="M255 107 L328 105 Q336 116 326 128 L252 128Z" fill="#efdede"/>
<g transform="rotate(-8 78 47)"><text x="78" y="47" font-family="Liberation Serif" font-size="42" letter-spacing="4" fill="#d2daea" stroke="#b0bcd2" stroke-width="1">EvoScan</text></g>
</svg></div>
</div>
<div style="position:absolute;left:387px;top:763px;white-space:nowrap;line-height:13px;font-size:12px;line-height:14px;">150</div>
<div style="position:absolute;left:1459px;top:763px;white-space:nowrap;line-height:13px;font-size:12px;line-height:14px;">150</div>
<div style="position:absolute;left:410px;top:770px;width:14px;height:1px;background:#000;"></div>
<div style="position:absolute;left:1443px;top:770px;width:14px;height:1px;background:#000;"></div>
<div style="position:absolute;left:423px;top:770px;width:1px;height:92px;background:#000;"></div>
<div style="position:absolute;left:424px;top:770px;width:1px;height:92px;background:#666;"></div>
<div style="position:absolute;left:1443px;top:770px;width:1px;height:92px;background:#000;"></div>
<div style="position:absolute;left:1444px;top:770px;width:1px;height:92px;background:#666;"></div>
<div style="position:absolute;left:425px;top:770px;width:1018px;height:1px;background:repeating-linear-gradient(90deg,#000 0 1px,transparent 1px 2px);"></div>
<div style="position:absolute;left:678px;top:771px;width:1px;height:92px;background:repeating-linear-gradient(#000 0 2px,transparent 2px 3px);"></div>
<div style="position:absolute;left:933px;top:771px;width:1px;height:92px;background:repeating-linear-gradient(#000 0 2px,transparent 2px 3px);"></div>
<div style="position:absolute;left:1188px;top:771px;width:1px;height:92px;background:repeating-linear-gradient(#000 0 2px,transparent 2px 3px);"></div>
<div style="position:absolute;left:444px;top:167px;width:435px;height:631px;background:rgba(0,0,0,.32);filter:blur(1.2px);"></div>
<div style="position:absolute;left:440px;top:161px;width:436px;height:634px;background:#fffde9;border:1px solid #7c7c7c;"></div>
<div style="position:absolute;left:441px;top:162px;width:434px;height:32px;background:linear-gradient(#ffffff 0%,#f7f8fa 45%,#eceef2 100%);"></div>
<div style="position:absolute;left:441px;top:192px;width:434px;height:1px;background:#d5d5d5;"></div>
<div style="position:absolute;left:441px;top:193px;width:434px;height:1px;background:#a0a090;"></div>
<div style="position:absolute;left:496px;top:163px;width:1px;height:29px;background:#e0e2e6;"></div>
<div style="position:absolute;left:496px;top:194px;width:1px;height:600px;background:#a0a090;"></div>
<div style="position:absolute;left:552px;top:163px;width:1px;height:29px;background:#e0e2e6;"></div>
<div style="position:absolute;left:552px;top:194px;width:1px;height:600px;background:#a0a090;"></div>
<div style="position:absolute;left:672px;top:163px;width:1px;height:29px;background:#e0e2e6;"></div>
<div style="position:absolute;left:672px;top:194px;width:1px;height:600px;background:#a0a090;"></div>
<div style="position:absolute;left:787px;top:163px;width:1px;height:29px;background:#e0e2e6;"></div>
<div style="position:absolute;left:787px;top:194px;width:1px;height:600px;background:#a0a090;"></div>
<div class="pc" style="left:443px;top:164px;width:55px;height:31px;line-height:31px;font-size:11px;">Load</div>
<div class="pc" style="left:497px;top:164px;width:38px;height:31px;line-height:31px;font-size:11px;">RPM</div>
<div class="pc" style="left:553px;top:166px;width:101px;height:28px;line-height:13px;font-size:10.8px;">Crank<br>Signal(On/Off)</div>
<div class="pc" style="left:673px;top:166px;width:96px;height:28px;line-height:13px;font-size:10.8px;">Interpolated<br>Target Calc</div>
<div class="pc" style="left:788px;top:166px;width:70px;height:28px;line-height:13px;font-size:10.8px;">Log<br>Seconds</div>
<svg style="position:absolute;left:862px;top:175px" width="10" height="6"><path d="M0 5.5 L5 0.5 L10 5.5Z" fill="#a8a8a8"/></svg>
<div class="pc" style="left:441px;top:194px;width:55px;">27.1</div>
<div class="pc" style="left:497px;top:194px;width:55px;">1000.0</div>
<div class="pc" style="left:553px;top:194px;width:119px;">0.0</div>
<div class="pc" style="left:673px;top:194px;width:114px;">14.7</div>
<div class="pc" style="left:788px;top:194px;width:87px;">0h 00m 01.014</div>
<div style="position:absolute;left:441px;top:214px;width:434px;height:1px;background:#a0a090;"></div>
<div class="pc" style="left:441px;top:214px;width:55px;">27.0</div>
<div class="pc" style="left:497px;top:214px;width:55px;">968.8</div>
<div class="pc" style="left:553px;top:214px;width:119px;">0.0</div>
<div class="pc" style="left:673px;top:214px;width:114px;">14.7</div>
<div class="pc" style="left:788px;top:214px;width:87px;">0h 00m 01.168</div>
<div style="position:absolute;left:441px;top:234px;width:434px;height:1px;background:#a0a090;"></div>
<div class="pc" style="left:441px;top:234px;width:55px;">26.8</div>
<div class="pc" style="left:497px;top:234px;width:55px;">906.3</div>
<div class="pc" style="left:553px;top:234px;width:119px;">0.0</div>
<div class="pc" style="left:673px;top:234px;width:114px;">14.7</div>
<div class="pc" style="left:788px;top:234px;width:87px;">0h 00m 01.284</div>
<div style="position:absolute;left:441px;top:254px;width:434px;height:1px;background:#a0a090;"></div>
<div class="pc" style="left:441px;top:254px;width:55px;">31.6</div>
<div class="pc" style="left:497px;top:254px;width:55px;">843.8</div>
<div class="pc" style="left:553px;top:254px;width:119px;">0.0</div>
<div class="pc" style="left:673px;top:254px;width:114px;">14.7</div>
<div class="pc" style="left:788px;top:254px;width:87px;">0h 00m 01.439</div>
<div style="position:absolute;left:441px;top:274px;width:434px;height:1px;background:#a0a090;"></div>
<div class="pc" style="left:441px;top:274px;width:55px;">31.2</div>
<div class="pc" style="left:497px;top:274px;width:55px;">812.5</div>
<div class="pc" style="left:553px;top:274px;width:119px;">0.0</div>
<div class="pc" style="left:673px;top:274px;width:114px;">14.7</div>
<div class="pc" style="left:788px;top:274px;width:87px;">0h 00m 01.588</div>
<div style="position:absolute;left:441px;top:294px;width:434px;height:1px;background:#a0a090;"></div>
<div class="pc" style="left:441px;top:294px;width:55px;">31.1</div>
<div class="pc" style="left:497px;top:294px;width:55px;">781.3</div>
<div class="pc" style="left:553px;top:294px;width:119px;">0.0</div>
<div class="pc" style="left:673px;top:294px;width:114px;">14.7</div>
<div class="pc" style="left:788px;top:294px;width:87px;">0h 00m 01.735</div>
<div style="position:absolute;left:441px;top:314px;width:434px;height:1px;background:#a0a090;"></div>
<div class="pc" style="left:441px;top:314px;width:55px;">31.4</div>
<div class="pc" style="left:497px;top:314px;width:55px;">781.3</div>
<div class="pc" style="left:553px;top:314px;width:119px;">0.0</div>
<div class="pc" style="left:673px;top:314px;width:114px;">14.7</div>
<div class="pc" style="left:788px;top:314px;width:87px;">0h 00m 01.891</div>
<div style="position:absolute;left:441px;top:334px;width:434px;height:1px;background:#a0a090;"></div>
<div class="pc" style="left:441px;top:334px;width:55px;">31.4</div>
<div class="pc" style="left:497px;top:334px;width:55px;">812.5</div>
<div class="pc" style="left:553px;top:334px;width:119px;">0.0</div>
<div class="pc" style="left:673px;top:334px;width:114px;">14.7</div>
<div class="pc" style="left:788px;top:334px;width:87px;">0h 00m 02.001</div>
<div style="position:absolute;left:441px;top:354px;width:434px;height:1px;background:#a0a090;"></div>
<div class="pc" style="left:441px;top:354px;width:55px;">31.7</div>
<div class="pc" style="left:497px;top:354px;width:55px;">843.8</div>
<div class="pc" style="left:553px;top:354px;width:119px;">0.0</div>
<div class="pc" style="left:673px;top:354px;width:114px;">14.7</div>
<div class="pc" style="left:788px;top:354px;width:87px;">0h 00m 02.149</div>
<div style="position:absolute;left:441px;top:374px;width:434px;height:1px;background:#a0a090;"></div>
<div class="pc" style="left:441px;top:374px;width:55px;">26.3</div>
<div class="pc" style="left:497px;top:374px;width:55px;">875.0</div>
<div class="pc" style="left:553px;top:374px;width:119px;">0.0</div>
<div class="pc" style="left:673px;top:374px;width:114px;">14.7</div>
<div class="pc" style="left:788px;top:374px;width:87px;">0h 00m 02.300</div>
<div style="position:absolute;left:441px;top:394px;width:434px;height:1px;background:#a0a090;"></div>
<div class="pc" style="left:441px;top:394px;width:55px;">26.8</div>
<div class="pc" style="left:497px;top:394px;width:55px;">875.0</div>
<div class="pc" style="left:553px;top:394px;width:119px;">0.0</div>
<div class="pc" style="left:673px;top:394px;width:114px;">14.7</div>
<div class="pc" style="left:788px;top:394px;width:87px;">0h 00m 02.457</div>
<div style="position:absolute;left:441px;top:414px;width:434px;height:1px;background:#a0a090;"></div>
<div class="pc" style="left:441px;top:414px;width:55px;">26.6</div>
<div class="pc" style="left:497px;top:414px;width:55px;">843.8</div>
<div class="pc" style="left:553px;top:414px;width:119px;">0.0</div>
<div class="pc" style="left:673px;top:414px;width:114px;">14.7</div>
<div class="pc" style="left:788px;top:414px;width:87px;">0h 00m 02.608</div>
<div style="position:absolute;left:441px;top:434px;width:434px;height:1px;background:#a0a090;"></div>
<div class="pc" style="left:441px;top:434px;width:55px;">26.7</div>
<div class="pc" style="left:497px;top:434px;width:55px;">843.8</div>
<div class="pc" style="left:553px;top:434px;width:119px;">0.0</div>
<div class="pc" style="left:673px;top:434px;width:114px;">14.7</div>
<div class="pc" style="left:788px;top:434px;width:87px;">0h 00m 02.776</div>
<div style="position:absolute;left:441px;top:454px;width:434px;height:1px;background:#a0a090;"></div>
<div class="pc" style="left:441px;top:454px;width:55px;">26.6</div>
<div class="pc" style="left:497px;top:454px;width:55px;">812.5</div>
<div class="pc" style="left:553px;top:454px;width:119px;">0.0</div>
<div class="pc" style="left:673px;top:454px;width:114px;">14.7</div>
<div class="pc" style="left:788px;top:454px;width:87px;">0h 00m 02.930</div>
<div style="position:absolute;left:441px;top:474px;width:434px;height:1px;background:#a0a090;"></div>
<div class="pc" style="left:441px;top:474px;width:55px;">26.4</div>
<div class="pc" style="left:497px;top:474px;width:55px;">812.5</div>
<div class="pc" style="left:553px;top:474px;width:119px;">0.0</div>
<div class="pc" style="left:673px;top:474px;width:114px;">14.7</div>
<div class="pc" style="left:788px;top:474px;width:87px;">0h 00m 03.080</div>
<div style="position:absolute;left:441px;top:494px;width:434px;height:1px;background:#a0a090;"></div>
<div class="pc" style="left:441px;top:494px;width:55px;">31.6</div>
<div class="pc" style="left:497px;top:494px;width:55px;">781.3</div>
<div class="pc" style="left:553px;top:494px;width:119px;">0.0</div>
<div class="pc" style="left:673px;top:494px;width:114px;">14.7</div>
<div class="pc" style="left:788px;top:494px;width:87px;">0h 00m 03.230</div>
<div style="position:absolute;left:441px;top:514px;width:434px;height:1px;background:#a0a090;"></div>
<div class="pc" style="left:441px;top:514px;width:55px;">26.6</div>
<div class="pc" style="left:497px;top:514px;width:55px;">812.5</div>
<div class="pc" style="left:553px;top:514px;width:119px;">0.0</div>
<div class="pc" style="left:673px;top:514px;width:114px;">14.7</div>
<div class="pc" style="left:788px;top:514px;width:87px;">0h 00m 03.380</div>
<div style="position:absolute;left:441px;top:534px;width:434px;height:1px;background:#a0a090;"></div>
<div class="pc" style="left:441px;top:534px;width:55px;">26.4</div>
<div class="pc" style="left:497px;top:534px;width:55px;">812.5</div>
<div class="pc" style="left:553px;top:534px;width:119px;">0.0</div>
<div class="pc" style="left:673px;top:534px;width:114px;">14.7</div>
<div class="pc" style="left:788px;top:534px;width:87px;">0h 00m 03.537</div>
<div style="position:absolute;left:441px;top:554px;width:434px;height:1px;background:#a0a090;"></div>
<div class="pc" style="left:441px;top:554px;width:55px;">26.1</div>
<div class="pc" style="left:497px;top:554px;width:55px;">781.3</div>
<div class="pc" style="left:553px;top:554px;width:119px;">0.0</div>
<div class="pc" style="left:673px;top:554px;width:114px;">14.7</div>
<div class="pc" style="left:788px;top:554px;width:87px;">0h 00m 03.693</div>
<div style="position:absolute;left:441px;top:574px;width:434px;height:1px;background:#a0a090;"></div>
<div style="position:absolute;left:441px;top:575px;width:55px;height:19px;background:#3399ff;"></div>
<div class="pc" style="left:441px;top:574px;width:55px;color:#fff;">26.4</div>
<div class="pc" style="left:497px;top:574px;width:55px;">750.0</div>
<div class="pc" style="left:553px;top:574px;width:119px;">0.0</div>
<div class="pc" style="left:673px;top:574px;width:114px;">14.7</div>
<div class="pc" style="left:788px;top:574px;width:87px;">0h 00m 03.849</div>
<div style="position:absolute;left:441px;top:594px;width:434px;height:1px;background:#a0a090;"></div>
<div class="pc" style="left:441px;top:594px;width:55px;">26.1</div>
<div class="pc" style="left:497px;top:594px;width:55px;">750.0</div>
<div class="pc" style="left:553px;top:594px;width:119px;">0.0</div>
<div class="pc" style="left:673px;top:594px;width:114px;">14.7</div>
<div class="pc" style="left:788px;top:594px;width:87px;">0h 00m 03.985</div>
<div style="position:absolute;left:441px;top:614px;width:434px;height:1px;background:#a0a090;"></div>
<div class="pc" style="left:441px;top:614px;width:55px;">26.3</div>
<div class="pc" style="left:497px;top:614px;width:55px;">750.0</div>
<div class="pc" style="left:553px;top:614px;width:119px;">0.0</div>
<div class="pc" style="left:673px;top:614px;width:114px;">14.7</div>
<div class="pc" style="left:788px;top:614px;width:87px;">0h 00m 04.135</div>
<div style="position:absolute;left:441px;top:634px;width:434px;height:1px;background:#a0a090;"></div>
<div class="pc" style="left:441px;top:634px;width:55px;">30.6</div>
<div class="pc" style="left:497px;top:634px;width:55px;">750.0</div>
<div class="pc" style="left:553px;top:634px;width:119px;">0.0</div>
<div class="pc" style="left:673px;top:634px;width:114px;">14.7</div>
<div class="pc" style="left:788px;top:634px;width:87px;">0h 00m 04.282</div>
<div style="position:absolute;left:441px;top:654px;width:434px;height:1px;background:#a0a090;"></div>
<div class="pc" style="left:441px;top:654px;width:55px;">26.2</div>
<div class="pc" style="left:497px;top:654px;width:55px;">750.0</div>
<div class="pc" style="left:553px;top:654px;width:119px;">0.0</div>
<div class="pc" style="left:673px;top:654px;width:114px;">14.7</div>
<div class="pc" style="left:788px;top:654px;width:87px;">0h 00m 04.590</div>
<div style="position:absolute;left:441px;top:674px;width:434px;height:1px;background:#a0a090;"></div>
<div class="pc" style="left:441px;top:674px;width:55px;">26.2</div>
<div class="pc" style="left:497px;top:674px;width:55px;">750.0</div>
<div class="pc" style="left:553px;top:674px;width:119px;">0.0</div>
<div class="pc" style="left:673px;top:674px;width:114px;">14.7</div>
<div class="pc" style="left:788px;top:674px;width:87px;">0h 00m 04.741</div>
<div style="position:absolute;left:441px;top:694px;width:434px;height:1px;background:#a0a090;"></div>
<div class="pc" style="left:441px;top:694px;width:55px;">26.1</div>
<div class="pc" style="left:497px;top:694px;width:55px;">781.3</div>
<div class="pc" style="left:553px;top:694px;width:119px;">0.0</div>
<div class="pc" style="left:673px;top:694px;width:114px;">14.7</div>
<div class="pc" style="left:788px;top:694px;width:87px;">0h 00m 04.891</div>
<div style="position:absolute;left:441px;top:714px;width:434px;height:1px;background:#a0a090;"></div>
<div class="pc" style="left:441px;top:714px;width:55px;">26.4</div>
<div class="pc" style="left:497px;top:714px;width:55px;">781.3</div>
<div class="pc" style="left:553px;top:714px;width:119px;">0.0</div>
<div class="pc" style="left:673px;top:714px;width:114px;">14.7</div>
<div class="pc" style="left:788px;top:714px;width:87px;">0h 00m 05.041</div>
<div style="position:absolute;left:441px;top:734px;width:434px;height:1px;background:#a0a090;"></div>
<div class="pc" style="left:441px;top:734px;width:55px;">26.2</div>
<div class="pc" style="left:497px;top:734px;width:55px;">750.0</div>
<div class="pc" style="left:553px;top:734px;width:119px;">0.0</div>
<div class="pc" style="left:673px;top:734px;width:114px;">14.7</div>
<div class="pc" style="left:788px;top:734px;width:87px;">0h 00m 05.198</div>
<div style="position:absolute;left:441px;top:754px;width:434px;height:1px;background:#a0a090;"></div>
<div class="pc" style="left:441px;top:754px;width:55px;">26.3</div>
<div class="pc" style="left:497px;top:754px;width:55px;">750.0</div>
<div class="pc" style="left:553px;top:754px;width:119px;">0.0</div>
<div class="pc" style="left:673px;top:754px;width:114px;">14.7</div>
<div class="pc" style="left:788px;top:754px;width:87px;">0h 00m 05.332</div>
<div style="position:absolute;left:441px;top:774px;width:434px;height:1px;background:#a0a090;"></div>
<div class="pc" style="left:441px;top:774px;width:55px;">25.9</div>
<div class="pc" style="left:497px;top:774px;width:55px;">750.0</div>
<div class="pc" style="left:553px;top:774px;width:119px;">0.0</div>
<div class="pc" style="left:673px;top:774px;width:114px;">14.7</div>
<div class="pc" style="left:788px;top:774px;width:87px;">0h 00m 05.497</div>
<div style="position:absolute;left:0px;top:860px;width:1600px;height:40px;background:linear-gradient(#2a2a2a 0%,#151515 10%,#0c0c0c 60%,#111 100%);"></div>
<div style="position:absolute;left:0px;top:860px;width:1600px;height:1px;background:#3a3a3a;"></div>
<div style="position:absolute;left:8px;top:861px;width:39px;height:39px;border-radius:50%;background:radial-gradient(circle at 50% 40%,#8ecbe8 0%,#3a8cc0 40%,#0c5a90 70%,#0a3050 100%);box-shadow:0 0 0 1px #0a1a2a,inset 0 0 0 1px rgba(120,180,220,.5);"></div>
<div style="position:absolute;left:13px;top:863px;width:29px;height:15px;border-radius:50% 50% 40% 40%;background:linear-gradient(rgba(255,255,255,.45),rgba(255,255,255,.05));"></div>
<svg style="position:absolute;left:17px;top:869px" width="22" height="22" viewBox="0 0 22 22"><path d="M2 4 Q6 2 10 4 L9 10 Q5 8 1.5 10Z" fill="#f26a2a"/><path d="M11 4 Q15 6 20 4 L19 10 Q15 12 10 10Z" fill="#8cc63f"/><path d="M1.5 11 Q5 9 9 11 L8 17 Q4 15 1 17Z" fill="#3aa0e0"/><path d="M10 11 Q15 13 19 11 L18 17 Q14 19 9 17Z" fill="#f5c42a"/></svg>
<svg style="position:absolute;left:71px;top:862px" width="36" height="36" viewBox="0 0 36 36"><circle cx="18" cy="19" r="12.5" fill="#2ea6e6"/><circle cx="18" cy="19" r="12.5" fill="none" stroke="#1a6fb0" stroke-width="1"/><ellipse cx="18.5" cy="15.5" rx="6.5" ry="3.2" fill="#0c0c0c"/><path d="M12 20.5 L32 20.5 L32 26 L24 26 Q20 24 12 24Z" fill="#0c0c0c"/><path d="M25 27 Q22 29.5 18 29.5" stroke="#2ea6e6" stroke-width="3" fill="none"/><ellipse cx="18" cy="18" rx="17" ry="6.5" transform="rotate(-38 18 18)" fill="none" stroke="#f0b429" stroke-width="2.4"/></svg>
<div style="position:absolute;left:122px;top:861px;width:58px;height:38px;border:1px solid #5a5a5a;border-radius:3px;background:linear-gradient(135deg,#5a5a5a 0%,#3a3a3a 50%,#222 100%);"></div>
<svg style="position:absolute;left:133px;top:864px" width="36" height="32" viewBox="0 0 36 32"><rect x="3" y="3" width="10" height="4" rx="1" fill="#5aa84a"/><rect x="10" y="5" width="10" height="4" rx="1" fill="#c8643a"/><rect x="16" y="7" width="16" height="4" rx="1" fill="#6a9ac8"/><path d="M2 6 H14 L16 9 H33 V30 H2Z" fill="#e6c978"/><path d="M2 11 H34 V30 H2Z" fill="#f6e3a8"/><path d="M7 19 H29 V31 H24 V25 H12 V31 H7Z" fill="#7cc0ea"/><path d="M9 21 H27 V23 H9Z" fill="#b8e0f8"/></svg>
<div style="position:absolute;left:200px;top:868px;width:24px;height:25px;background:linear-gradient(#9cc8ea,#5a9ad0);border:1px solid #c8e0f4;"></div>
<div style="position:absolute;left:202px;top:870px;width:17px;height:17px;border-radius:50%;background:#ef8a2a;"></div>
<svg style="position:absolute;left:207px;top:873px" width="9" height="11"><path d="M0 0 L9 5.5 L0 11Z" fill="#fff"/></svg>
<div style="position:absolute;left:247px;top:861px;width:57px;height:38px;border:1px solid #5a5a5a;border-radius:3px;background:linear-gradient(135deg,#5a5a5a 0%,#3a3a3a 50%,#222 100%);"></div>
<svg style="position:absolute;left:261px;top:865px" width="30" height="30" viewBox="0 0 30 30"><circle cx="15" cy="15" r="14" fill="#e0a52a"/><path d="M15 15 L3 8 A14 14 0 0 1 27 8Z" fill="#d9412e"/><path d="M15 15 L3 8 A14 14 0 0 0 15 29Z" fill="#2e9a4a"/><circle cx="15" cy="15" r="6.5" fill="#fff"/><circle cx="15" cy="15" r="5" fill="#3d7ed8"/></svg>
<div style="position:absolute;left:308px;top:861px;width:57px;height:38px;border:1px solid #5a5a5a;border-radius:3px;background:linear-gradient(90deg,#9ad89a 0%,#40c040 48%,#333 50%,#1c1c1c 100%);"></div>
<svg style="position:absolute;left:324px;top:866px" width="26" height="28" viewBox="0 0 26 28"><path d="M3 6 L17 1 L23 3 L23 25 L17 27 L3 22Z M8 8 L8 20 L15 23 L15 6Z" fill="#e8431c" fill-rule="evenodd"/></svg>
<div style="position:absolute;left:370px;top:861px;width:54px;height:38px;border:1px solid #7a7a7a;border-radius:3px;background:linear-gradient(135deg,#c8c8c8 0%,#8a8a8a 50%,#6a6a6a 100%);"></div>
<div style="position:absolute;left:383px;top:866px;width:24px;height:24px;border-radius:50%;background:radial-gradient(circle at 40% 35%,#7ad04a 0%,#3aa040 30%,#1a70c0 60%,#0a3a80 100%);"></div>
<svg style="position:absolute;left:396px;top:880px" width="16" height="16"><path d="M3 2 L10 2 L10 8 L3 8Z" fill="#dfe8f2"/><path d="M6 8 Q6 14 1 13" stroke="#dfe8f2" stroke-width="2" fill="none"/></svg>
<div style="position:absolute;left:425px;top:862px;width:2px;height:36px;background:#555;"></div>
<svg style="position:absolute;left:1374px;top:878px" width="9" height="6"><path d="M0 5.5 L4.5 0.5 L9 5.5Z" fill="#e8e8e8"/></svg>
<svg style="position:absolute;left:1393px;top:870px" width="20" height="20" viewBox="0 0 20 20"><path d="M10 1 L13 6 L19 5 L15 10 L18 17 L11 14 L5 19 L5 12 L1 8 L7 6Z" fill="#f08a2a"/><text x="10" y="13" text-anchor="middle" font-size="8" fill="#fff" font-family="Liberation Sans">a</text></svg>
<svg style="position:absolute;left:1419px;top:872px" width="16" height="16" viewBox="0 0 16 16"><path d="M1 1 L1 15" stroke="#eee" stroke-width="1.5"/><path d="M2 2 L8 2 L9 4 L14 4 L12 7 L14 9 L8 9 L7 7 L2 7Z" fill="#eee"/></svg>
<svg style="position:absolute;left:1443px;top:872px" width="16" height="18" viewBox="0 0 16 18"><rect x="1" y="3" width="10" height="12" fill="none" stroke="#eee" stroke-width="1.5"/><rect x="6" y="1" width="2" height="5" fill="#eee"/><rect x="10" y="1" width="2" height="5" fill="#eee"/><rect x="5" y="5" width="8" height="6" fill="#eee"/><rect x="8" y="11" width="2" height="6" fill="#eee"/></svg>
<svg style="position:absolute;left:1467px;top:875px" width="16" height="12" viewBox="0 0 16 12"><rect x="0" y="9" width="2" height="2" fill="#eee"/><rect x="3" y="7" width="2" height="4" fill="#eee"/><rect x="6" y="5" width="2" height="6" fill="#eee"/><rect x="9" y="3" width="2" height="8" fill="#eee"/><rect x="12" y="1" width="2" height="10" fill="#eee"/></svg>
<svg style="position:absolute;left:1493px;top:873px" width="14" height="15" viewBox="0 0 14 15"><path d="M1 5 L4 5 L9 1 L9 14 L4 10 L1 10Z" fill="#eee"/><path d="M11 5 Q13 7.5 11 10" stroke="#ccc" stroke-width="1" fill="none"/></svg>
<div style="position:absolute;left:1525px;top:866px;white-space:nowrap;line-height:13px;font-size:11.5px;color:#fff;">12:58 PM</div>
<div style="position:absolute;left:1526px;top:883px;white-space:nowrap;line-height:13px;font-size:11.5px;color:#fff;">4/7/2018</div>
<div style="position:absolute;left:1586px;top:862px;width:13px;height:37px;border:1px solid #5a5a5a;border-radius:2px;background:linear-gradient(135deg,#4a4a4a,#1a1a1a);"></div>
</body></html>
